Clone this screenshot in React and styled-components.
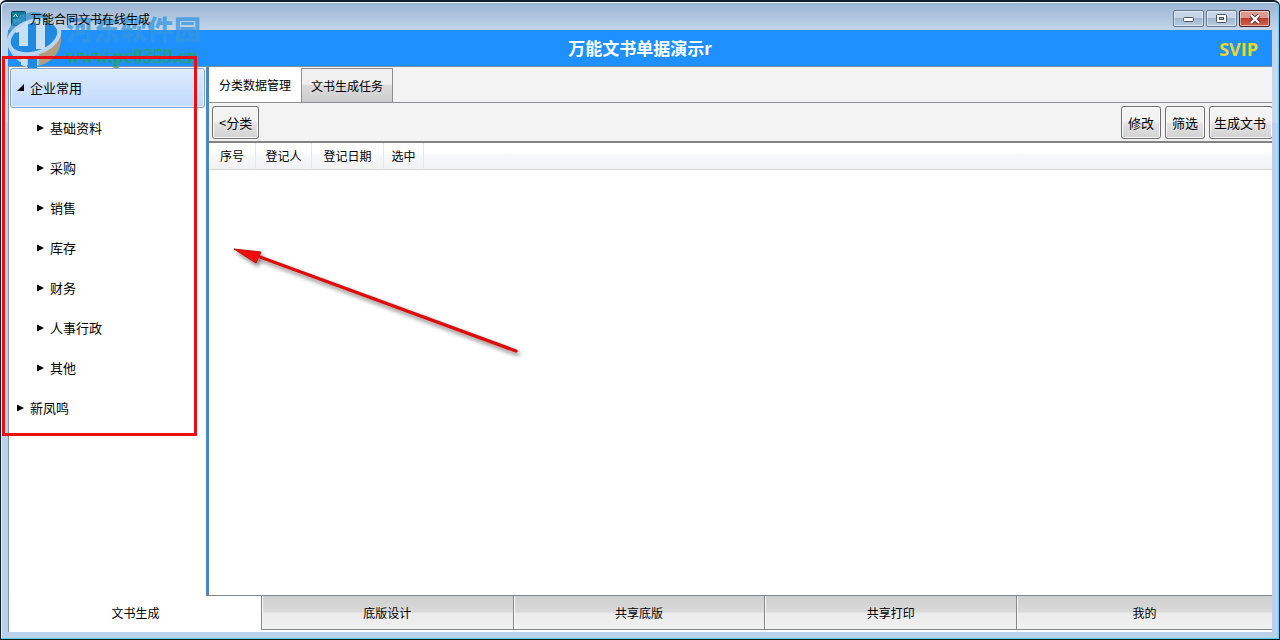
import React, {useState} from 'react'
import styled, { createGlobalStyle, css } from 'styled-components';


const GlobalStyle = createGlobalStyle`
  * {
    box-sizing: border-box;
  }

  body {
    margin: 0;
    font-family: "Noto Sans CJK SC", "Liberation Sans", sans-serif;
    font-size: 12px;
    color: #000;
  }

  button {
    font-family: inherit;
    color: inherit;
    padding: 0;
    margin: 0;
  }
`;

const Window = styled.div`
  position: relative;
  display: flex;
  flex-direction: column;
  min-height: 100vh;
  padding: 0 7px 7px 7px;
  border: 1px solid #10202c;
  border-top-width: 2px;
  border-radius: 6px 6px 0 0;
  background: linear-gradient(#98b4d3, #c3d5ea 28px, #c9d9ec 120px, #b9d1ea 121px);
  box-shadow: inset -1px -1px 0 #5fd0f0, inset 1px 1px 0 #e3eef9;
  overflow: hidden;
`;

const TitleBar = styled.div`
  display: flex;
  align-items: center;
  height: 28px;
  padding: 5px 2px 0 3px;
`;

const WindowTitle = styled.span`
  position: relative;
  z-index: 2;
  flex: 1;
  padding-left: 4px;
  font-size: 12px;
  line-height: 18px;
`;

const WindowButtons = styled.div`
  display: flex;
  gap: 2px;
`;

const WindowButton = styled.button`
  display: flex;
  align-items: center;
  justify-content: center;
  width: 31px;
  height: 17px;
  border: 1px solid #65788f;
  border-radius: 2px;
  background: linear-gradient(#c6d6e8 45%, #9fb6d0 50%, #b9cde2);
  box-shadow: inset 0 0 0 1px rgba(255, 255, 255, 0.5);

  ${({ $close }) => $close && css`
    border-color: #4f1f24;
    background: linear-gradient(#dc9a8e 45%, #bd3c2a 50%, #cf6650);
  `}
`;

const Header = styled.header`
  display: grid;
  grid-template-columns: 1fr auto 1fr;
  align-items: center;
  height: 37px;
  border-bottom: 1px solid #7c8fa6;
  background: #1e90ff;
`;

const HeaderTitle = styled.h1`
  grid-column: 2;
  margin: 0;
  font-size: 17px;
  line-height: 24px;
  font-weight: 700;
  color: #fff;
`;

const Vip = styled.span`
  justify-self: end;
  padding-top: 2px;
  padding-right: 14px;
  font-family: "Open Sans", "Noto Sans", sans-serif;
  font-size: 18px;
  line-height: 24px;
  font-weight: 700;
  color: #e6d72a;
`;

const Body = styled.div`
  display: flex;
  flex: 1;
  border-left: 1px solid #8295ab;
  background: #fff;
`;

const Sidebar = styled.nav`
  flex: 0 0 197px;
`;

const Tree = styled.ul`
  margin: 0;
  padding: 1px 1px 0;
  list-style: none;
`;

const TreeItem = styled.button`
  display: flex;
  align-items: center;
  gap: 5px;
  width: 100%;
  height: 40px;
  padding-left: ${({ $level }) => ($level ? 26 : 6)}px;
  border: 1px solid transparent;
  border-radius: 3px;
  background: none;
  font-size: 13px;
  line-height: 20px;
  text-align: left;

  ${({ $selected }) => $selected && css`
    border-color: #7da2ce;
    background: linear-gradient(#dcebfd, #c1dbfc);
    box-shadow: inset 0 0 0 1px #e8f2fe;
  `}
`;

const Main = styled.main`
  display: flex;
  flex: 1;
  flex-direction: column;
  min-width: 0;
  border-left: 3px solid #5086c0;
  border-bottom: 1px solid #828790;
`;

const TabStrip = styled.div`
  display: flex;
  height: 36px;
  border-bottom: 1px solid #8c8e94;
  background: #f3f3f3;
`;

const Tab = styled.button`
  height: ${({ $active }) => ($active ? 35 : 34)}px;
  padding: 0 9px;
  margin-top: ${({ $active }) => ($active ? 0 : 1)}px;
  border: 1px solid #8c8e94;
  border-bottom: none;
  background: linear-gradient(#f0f0f0 45%, #dcdcdc 50%, #cdcdcd);
  font-size: 12px;
  line-height: 18px;

  ${({ $active }) => $active && css`
    border-color: transparent;
    background: #fff;
  `}
`;

const Toolbar = styled.div`
  display: flex;
  align-items: flex-start;
  gap: 4px;
  height: 40px;
  padding: 3px 0 0 3px;
  border-bottom: 2px solid #828282;
  background: #f3f3f3;
  overflow: hidden;
`;

const ToolButton = styled.button`
  flex: none;
  height: 33px;
  padding: 0 6px;
  border: 1px solid #707070;
  border-radius: 3px;
  background: linear-gradient(#f3f3f3 45%, #e2e2e2 55%, #d2d2d2);
  box-shadow: inset 0 0 0 1px #fafafa;
  font-size: 13px;
  line-height: 18px;
`;

/* runs on past the right edge of the toolbar */
const LastToolButton = styled(ToolButton)`
  padding: 0 6px 0 4px;
  margin-right: -1px;
`;

const Spacer = styled.div`
  flex: 1;
`;

const Table = styled.table`
  width: 100%;
  border-collapse: separate;
  border-spacing: 0;
`;

const HeadCell = styled.th`
  width: ${({ $width }) => ($width ? `${$width}px` : 'auto')};
  height: 27px;
  padding: 0;
  border-right: 1px solid #e3e8ee;
  border-bottom: 1px solid #d5d5d5;
  background: linear-gradient(#fff 40%, #f7f8fa 45%, #f1f2f4);
  font-size: 12px;
  line-height: 18px;
  font-weight: 400;

  &:last-child {
    border-right: none;
  }
`;

const BottomTabs = styled.div`
  display: grid;
  grid-template-columns: repeat(4, 252fr) 256fr;
  height: 36px;
  border-left: 1px solid #8295ab;
  background: #fff;
`;

const BottomTab = styled.button`
  height: 34px;
  border: none;
  border-left: 1px solid #828790;
  border-bottom: 1px solid #828790;
  background: linear-gradient(#cfcfcf, #dadada 48%, #ebebeb 52%, #f1f1f1);
  box-shadow: inset 1px 0 0 #f8f8f8;
  font-size: 12px;
  line-height: 18px;

  ${({ $active }) => $active && css`
    border-color: transparent;
    background: #fff;
  `}
`;

const Watermark = styled.div`
  position: absolute;
  left: 3px;
  top: 8px;
  display: flex;
  gap: 2px;
  pointer-events: none;
`;

const WatermarkText = styled.div`
  padding-top: 4px;
  white-space: nowrap;
`;

const WatermarkName = styled.div`
  font-size: 27px;
  line-height: 30px;
  font-weight: 900;
  color: rgba(52, 150, 222, 0.75);
`;

const WatermarkUrl = styled.div`
  padding-top: 1px;
  font-family: "Liberation Serif", serif;
  font-size: 20px;
  line-height: 22px;
  font-weight: 700;
  color: rgba(40, 165, 70, 0.8);
`;

const Highlight = styled.div`
  position: absolute;
  left: 1px;
  top: 54px;
  width: 195px;
  height: 380px;
  border: 3px solid #e81010;
  pointer-events: none;
`;

const Arrow = styled.svg`
  position: absolute;
  left: 224px;
  top: 238px;
  pointer-events: none;
`;


const tree = [
  { name: '企业常用', level: 0, open: true },
  { name: '基础资料', level: 1 },
  { name: '采购', level: 1 },
  { name: '销售', level: 1 },
  { name: '库存', level: 1 },
  { name: '财务', level: 1 },
  { name: '人事行政', level: 1 },
  { name: '其他', level: 1 },
  { name: '新凤鸣', level: 0 },
];

const columns = [
  { name: '序号', width: 47 },
  { name: '登记人', width: 56 },
  { name: '登记日期', width: 72 },
  { name: '选中', width: 40 },
];

const topTabs = ['分类数据管理', '文书生成任务'];
const bottomTabs = ['文书生成', '底版设计', '共享底版', '共享打印', '我的'];


const AppIcon = () => (
  <svg width="15" height="15" viewBox="0 0 15 15">
    <rect x="0.5" y="0.5" width="14" height="14" rx="1" fill="#0b7f9a" stroke="#0a4658" />
    <path d="M2.5 6l2-3 2 3M9 5h1M12 5h1" stroke="#d5fbfb" fill="none" />
    <path d="M3 8v3h2V8M7 11V8l2 3V8M11 11h2" stroke="#4fc3d4" fill="none" />
  </svg>
);

const TreeArrow = ({ open }) => (
  <svg width="8" height="8" viewBox="0 0 8 8">
    <path d={open ? 'M7 0v7H0z' : 'M0 0.5v7l7-3.5z'} />
  </svg>
);

const WatermarkLogo = () => (
  <svg width="60" height="60" viewBox="0 0 60 60">
    <defs>
      <clipPath id="disc"><circle cx="30" cy="29" r="27" /></clipPath>
    </defs>
    <g clipPath="url(#disc)">
      <path d="M0 0h60v22L30 40 0 32z" fill="#3b90c8" opacity="0.75" />
      <path d="M0 32c10 12 25 14 37 9v19H0z" fill="#b9d5ef" opacity="0.9" />
      <path d="M35 42c13-4 20-12 24-22v40H35z" fill="#b49d7d" />
    </g>
    <ellipse cx="30" cy="27" rx="26" ry="16" transform="rotate(-18 30 27)" fill="#2089e0" stroke="#b9d5ef" strokeWidth="4" />
    <path d="M12 19l10-7h2v24h-9V22l-3 1z" fill="#c9dff3" />
    <path d="M32 11h9v28h-9zM23 47h-6v8l6 2z" fill="#c9dff3" />
    <path d="M24 48h9v10h-9z" fill="#2089e0" />
  </svg>
);

const App = () => {

    const [selected, setSelected] = useState(tree[0].name);
    const [topTab, setTopTab] = useState(topTabs[0]);
    const [bottomTab, setBottomTab] = useState(bottomTabs[0]);

    return (
        <>
          <GlobalStyle />
          <Window>
            <TitleBar>
              <AppIcon />
              <WindowTitle>万能合同文书在线生成</WindowTitle>
              <WindowButtons>
                <WindowButton aria-label="最小化">
                  <svg width="12" height="6" viewBox="0 0 12 6">
                    <rect x="0.5" y="1.5" width="10" height="4" rx="1" fill="#fff" stroke="#4b5562" />
                  </svg>
                </WindowButton>
                <WindowButton aria-label="最大化">
                  <svg width="12" height="9" viewBox="0 0 12 9">
                    <rect x="0.5" y="0.5" width="10" height="8" rx="1" fill="#fff" stroke="#4b5562" />
                    <rect x="3.5" y="3.5" width="4" height="2" fill="#9fb6d0" stroke="#4b5562" />
                  </svg>
                </WindowButton>
                <WindowButton $close aria-label="关闭">
                  <svg width="12" height="10" viewBox="0 0 12 10">
                    <path d="M2 1l8 8M10 1l-8 8" stroke="#5b2a2e" strokeWidth="4" />
                    <path d="M2 1l8 8M10 1l-8 8" stroke="#fff" strokeWidth="2.4" />
                  </svg>
                </WindowButton>
              </WindowButtons>
            </TitleBar>

            <Header>
              <HeaderTitle>万能文书单据演示r</HeaderTitle>
              <Vip>SVIP</Vip>
            </Header>

            <Body>
              <Sidebar>
                <Tree>
                  {tree.map((item) => (
                    <li key={item.name}>
                      <TreeItem
                        $level={item.level}
                        $selected={item.name === selected}
                        onClick={() => setSelected(item.name)}
                      >
                        <TreeArrow open={item.open} />
                        {item.name}
                      </TreeItem>
                    </li>
                  ))}
                </Tree>
              </Sidebar>

              <Main>
                <TabStrip>
                  {topTabs.map((name) => (
                    <Tab key={name} $active={name === topTab} onClick={() => setTopTab(name)}>{name}</Tab>
                  ))}
                </TabStrip>
                <Toolbar>
                  <ToolButton>&lt;分类</ToolButton>
                  <Spacer />
                  <ToolButton>修改</ToolButton>
                  <ToolButton>筛选</ToolButton>
                  <LastToolButton>生成文书</LastToolButton>
                </Toolbar>
                <Table>
                  <thead>
                    <tr>
                      {columns.map((col) => (
                        <HeadCell key={col.name} $width={col.width}>{col.name}</HeadCell>
                      ))}
                      <HeadCell as="td" />
                    </tr>
                  </thead>
                </Table>
              </Main>
            </Body>

            <BottomTabs>
              {bottomTabs.map((name) => (
                <BottomTab key={name} $active={name === bottomTab} onClick={() => setBottomTab(name)}>{name}</BottomTab>
              ))}
            </BottomTabs>

            <Watermark>
              <WatermarkLogo />
              <WatermarkText>
                <WatermarkName>河东软件园</WatermarkName>
                <WatermarkUrl>www.pc0359.cn</WatermarkUrl>
              </WatermarkText>
            </Watermark>

            <Highlight />

            <Arrow width="304" height="124" viewBox="0 0 304 124">
              <defs>
                <filter id="shadow" x="-10%" y="-10%" width="120%" height="130%">
                  <feDropShadow dx="2" dy="3" stdDeviation="2" floodOpacity="0.5" />
                </filter>
              </defs>
              <g filter="url(#shadow)">
                <path d="M35 17L291 111" stroke="#dd0f0f" strokeWidth="3.4" strokeLinecap="round" />
                <path d="M9 9L36 12L31 23z" fill="#f00a0a" stroke="#c01010" />
              </g>
            </Arrow>
          </Window>
        </>
    )
}

export default App
